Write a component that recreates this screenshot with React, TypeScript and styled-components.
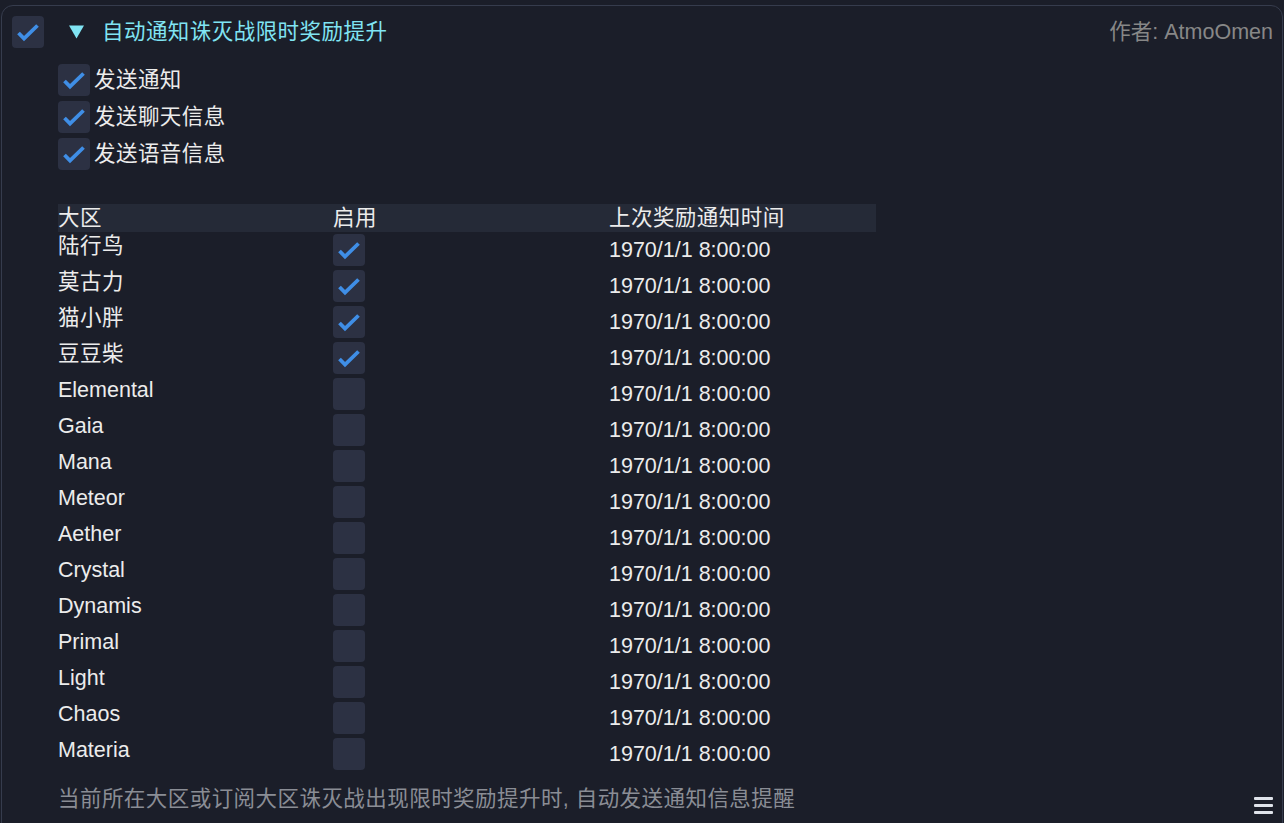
import React from "react";
import styled, { createGlobalStyle } from "styled-components";

const Global = createGlobalStyle`
  html, body {
    margin: 0;
    padding: 0;
    background: #1b1e29;
    overflow: hidden;
  }
  body {
    font-family: "Liberation Sans", "Noto Sans CJK SC", sans-serif;
    font-size: 21.5px;
    color: #ececec;
  }
`;

const Panel = styled.div`
  margin: 5px 1px 0 1px;
  height: 840px;
  border: 1px solid #363c4d;
  border-radius: 12px;
  box-sizing: border-box;
  padding: 10px 9px 0 10px;
  display: flex;
  flex-direction: column;
`;

const TopBar = styled.div`
  display: flex;
  align-items: center;
  height: 32px;
`;

const Cjk = styled.span`
  letter-spacing: 0.45px;
`;

const Title = styled(Cjk)`
  color: #80e4f3;
  margin-left: 18px;
  line-height: 32px;
`;

const Author = styled.div`
  margin-left: auto;
  color: #878787;
  line-height: 32px;
`;

const Box = styled.div`
  width: 32px;
  height: 32px;
  flex: 0 0 32px;
  border-radius: 4px;
  background: #2c3143;
  display: flex;
  align-items: center;
  justify-content: center;
`;

const Content = styled.div`
  padding-left: 46px;
  display: flex;
  flex-direction: column;
`;

const OptionList = styled.div`
  margin-top: 16px;
  display: flex;
  flex-direction: column;
  gap: 5px;
`;

const Option = styled.div`
  display: flex;
  align-items: center;
  gap: 4px;
  line-height: 32px;
`;

const Table = styled.div`
  margin-top: 34px;
  width: 818px;
  display: flex;
  flex-direction: column;
`;

const HeaderRow = styled.div`
  display: grid;
  grid-template-columns: 275px 276px 267px;
  height: 28px;
  line-height: 28px;
  background: #252a37;
  margin-bottom: 2px;
`;

const Row = styled.div`
  display: grid;
  grid-template-columns: 275px 276px 267px;
  height: 36px;
`;

const NameCell = styled.div`
  line-height: 25px;
  letter-spacing: ${(p: { $cjk?: boolean }) => (p.$cjk ? "0.45px" : "0")};
`;

const DateCell = styled.div`
  line-height: 33px;
`;

const Footer = styled.div`
  display: flex;
  align-items: center;
  justify-content: space-between;
  margin-top: 10px;
  line-height: 30px;
`;

const Hint = styled(Cjk)`
  color: #8a8d95;
`;

const Menu = styled.div`
  width: 19px;
  display: flex;
  flex-direction: column;
  gap: 4px;
  margin-top: 12px;
  span {
    display: block;
    height: 3px;
    border-radius: 1px;
    background: #dfe3ea;
  }
`;

const Check = () => (
  <svg width="32" height="32" viewBox="0 0 32 32">
    <polyline
      points="6.5,17 12,22.5 25.5,9.5"
      fill="none"
      stroke="#3f8ee6"
      strokeWidth="3.8"
      strokeLinejoin="miter"
    />
  </svg>
);

const CheckBox = ({ checked }: { checked: boolean }) => <Box>{checked && <Check />}</Box>;

const Triangle = () => (
  <svg width="15" height="14" viewBox="0 0 15 14" style={{ marginLeft: 25 }}>
    <polygon points="0,0.5 15,0.5 7.5,13.5" fill="#80e4f3" />
  </svg>
);

const regions: { name: string; on: boolean; cjk?: boolean }[] = [
  { name: "陆行鸟", on: true, cjk: true },
  { name: "莫古力", on: true, cjk: true },
  { name: "猫小胖", on: true, cjk: true },
  { name: "豆豆柴", on: true, cjk: true },
  { name: "Elemental", on: false },
  { name: "Gaia", on: false },
  { name: "Mana", on: false },
  { name: "Meteor", on: false },
  { name: "Aether", on: false },
  { name: "Crystal", on: false },
  { name: "Dynamis", on: false },
  { name: "Primal", on: false },
  { name: "Light", on: false },
  { name: "Chaos", on: false },
  { name: "Materia", on: false },
];

export default function App() {
  return (
    <>
      <Global />
      <Panel>
        <TopBar>
          <CheckBox checked />
          <Triangle />
          <Title>自动通知诛灭战限时奖励提升</Title>
          <Author>作者: AtmoOmen</Author>
        </TopBar>
        <Content>
          <OptionList>
            <Option>
              <CheckBox checked />
              <Cjk>发送通知</Cjk>
            </Option>
            <Option>
              <CheckBox checked />
              <Cjk>发送聊天信息</Cjk>
            </Option>
            <Option>
              <CheckBox checked />
              <Cjk>发送语音信息</Cjk>
            </Option>
          </OptionList>
          <Table>
            <HeaderRow>
              <Cjk>大区</Cjk>
              <Cjk>启用</Cjk>
              <Cjk>上次奖励通知时间</Cjk>
            </HeaderRow>
            {regions.map((r) => (
              <Row key={r.name}>
                <NameCell $cjk={r.cjk}>{r.name}</NameCell>
                <div>
                  <CheckBox checked={r.on} />
                </div>
                <DateCell>1970/1/1 8:00:00</DateCell>
              </Row>
            ))}
          </Table>
          <Footer>
            <Hint>当前所在大区或订阅大区诛灭战出现限时奖励提升时, 自动发送通知信息提醒</Hint>
            <Menu>
              <span />
              <span />
              <span />
            </Menu>
          </Footer>
        </Content>
      </Panel>
    </>
  );
}
